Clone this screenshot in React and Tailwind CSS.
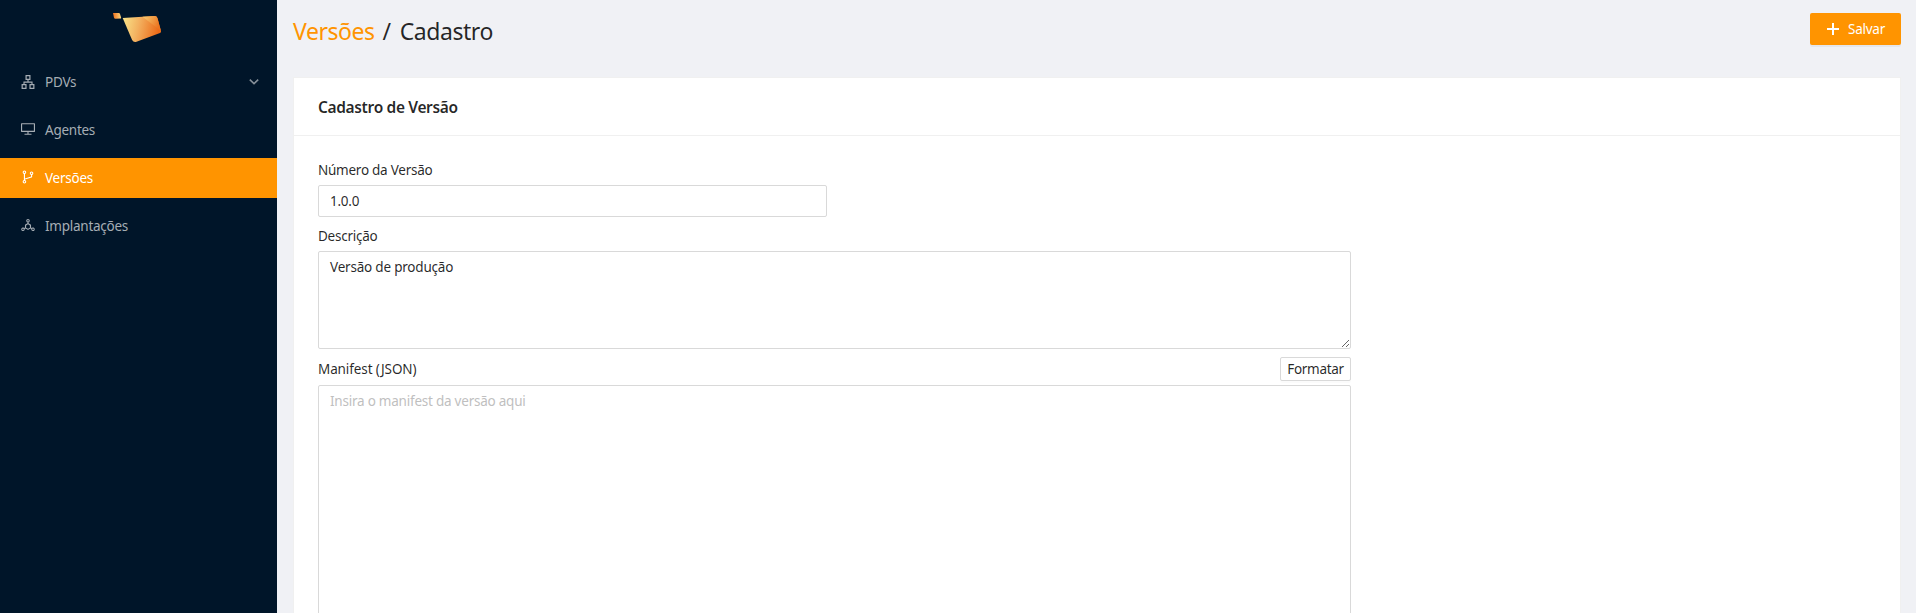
import {
  AiOutlineApartment,
  AiOutlineDesktop,
  AiOutlineBranches,
  AiOutlineDeploymentUnit,
} from "react-icons/ai";

function Logo() {
  return (
    <svg width="50" height="31" viewBox="0 0 50 31" className="block">
      <defs>
        <linearGradient id="tag" x1="0" x2="1" y1="0" y2="0">
          <stop offset="0" stopColor="#f0701c" />
          <stop offset="1" stopColor="#fbd77e" />
        </linearGradient>
        <linearGradient id="body" x1="0" x2="1" y1="0" y2="0.15">
          <stop offset="0" stopColor="#f9e58a" />
          <stop offset="0.45" stopColor="#f3b160" />
          <stop offset="1" stopColor="#ec6a17" />
        </linearGradient>
        <linearGradient id="fold" x1="0" x2="1" y1="0" y2="0.4">
          <stop offset="0" stopColor="#f8cf74" />
          <stop offset="1" stopColor="#ec7420" />
        </linearGradient>
      </defs>
      <path d="M1 1h5.800Q7.600 1 7.900 1.800L9.100 5.500 9 6.400 3.400 6.800Q2.300 6.800 2 5.700Z" fill="url(#tag)" />
      <path d="M10.700 6 42.600 4Q44.800 3.900 45.400 6L49 19q.3 1.400-1 1.900L24.500 29.700q-3 .9-4.400-1.700Z" fill="url(#body)" />
      <path d="M30.500 4.800 42.600 4Q44.800 3.900 45.400 6L48.900 18.700Z" fill="url(#fold)" />
    </svg>
  );
}

function ChevronDown() {
  return (
    <svg width="10" height="6" viewBox="0 0 10 6" fill="none" className="mb-px opacity-80">
      <path d="M.8.700 5 4.700 9.200.700" stroke="currentColor" strokeWidth="1.600" />
    </svg>
  );
}

function Plus() {
  return (
    <svg width="12" height="12" viewBox="0 0 12 12" fill="none">
      <path d="M6 0v12M0 6h12" stroke="currentColor" strokeWidth="2" />
    </svg>
  );
}

const items = [
  { label: "PDVs", Icon: AiOutlineApartment, submenu: true },
  { label: "Agentes", Icon: AiOutlineDesktop },
  { label: "Versões", Icon: AiOutlineBranches, active: true },
  { label: "Implantações", Icon: AiOutlineDeploymentUnit },
];

function Sidebar() {
  return (
    <aside className="w-[277px] shrink-0 bg-[#001529]">
      <div className="flex h-[62px] pt-3 pl-28">
        <Logo />
      </div>
      <nav className="flex flex-col gap-2">
        {items.map(({ label, Icon, submenu, active }) => (
          <a
            key={label}
            className={
              active
                ? "flex h-10 items-center bg-[#ff9400] pr-[18px] pl-5 text-white"
                : "flex h-10 items-center pr-[18px] pl-5 text-[#a6adb4]"
            }
          >
            <Icon className={submenu ? "size-4 shrink-0" : "mb-0.5 size-4 shrink-0"} />
            <span className="ml-[9px] flex-1">{label}</span>
            {submenu && <ChevronDown />}
          </a>
        ))}
      </nav>
    </aside>
  );
}

export default function App() {
  return (
    <div className="flex h-[613px] overflow-hidden bg-[#f0f1f5] font-['Noto_Sans',sans-serif] text-[13.5px] leading-[22px] tracking-[-0.25px] text-black/85">
      <Sidebar />
      <main className="flex min-w-0 flex-1 flex-col pr-[15px] pl-4">
        <header className="flex h-[77px] shrink-0 items-start justify-between pt-[13px]">
          <h1 className="flex pt-px text-[23px] leading-[34px] tracking-[-0.45px]">
            <span className="text-[#ff9400]">Versões</span>
            <span className="mr-[9px] ml-2">/</span>
            <span>Cadastro</span>
          </h1>
          <button className="flex h-8 w-[91px] items-center justify-center gap-[9px] rounded-xs bg-[#ff9400] pl-px text-white shadow-[0_2px_0_rgba(0,0,0,0.045)]">
            <Plus />
            <span>Salvar</span>
          </button>
        </header>
        <section className="h-[700px] shrink-0 border border-[#f0f0f0] bg-white">
          <div className="flex h-[58px] items-center border-b border-[#f0f0f0] px-6">
            <h2 className="text-[15.5px] font-semibold tracking-[-0.35px]">Cadastro de Versão</h2>
          </div>
          <div className="flex flex-col px-6 pt-6">
            <label className="flex h-[25px] items-center pb-1.5">Número da Versão</label>
            <input
              defaultValue="1.0.0"
              className="h-8 w-[509px] rounded-xs border border-[#d9d9d9] px-[11px] tracking-[-0.25px] outline-none"
            />
            <label className="mt-[9px] flex h-[25px] items-center pb-1.5">Descrição</label>
            <textarea
              defaultValue="Versão de produção"
              className="h-[98px] w-[1033px] rounded-xs border border-[#d9d9d9] px-[11px] py-1 tracking-[-0.2px] outline-none"
            />
            <div className="mt-2 mb-1 flex h-6 w-[1033px] items-center justify-between">
              <label className="tracking-[-0.1px]">Manifest (JSON)</label>
              <button className="h-6 w-[71px] rounded-xs border border-[#d9d9d9] bg-white leading-[22px] tracking-[-0.3px] shadow-[0_2px_0_rgba(0,0,0,0.015)]">
                Formatar
              </button>
            </div>
            <textarea
              placeholder="Insira o manifest da versão aqui"
              className="h-[300px] w-[1033px] rounded-xs border border-[#d9d9d9] px-[11px] py-1 tracking-[-0.23px] outline-none placeholder:text-[#bfbfbf]"
            />
          </div>
        </section>
      </main>
    </div>
  );
}
